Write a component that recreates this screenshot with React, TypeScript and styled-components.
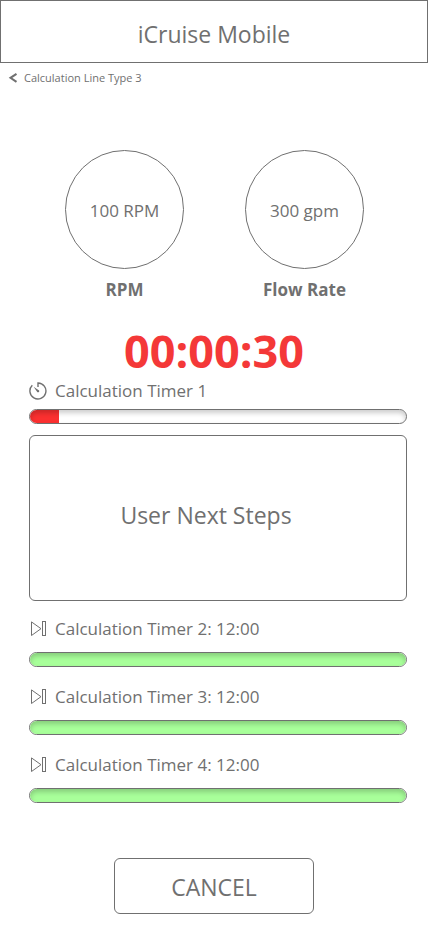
import React from "react";
import styled, { createGlobalStyle } from "styled-components";

const GlobalStyle = createGlobalStyle`
  *, *::before, *::after {
    box-sizing: border-box;
  }

  body {
    margin: 0;
    background: #ffffff;
    color: #707070;
    font-family: "Open Sans", "Noto Sans", sans-serif;
    font-size: 17px;
    line-height: 24px;
  }

  button {
    font: inherit;
    color: inherit;
  }
`;

const Screen = styled.div`
  display: flex;
  flex-direction: column;
  min-height: 100vh;
`;

const Header = styled.header`
  display: flex;
  align-items: center;
  justify-content: center;
  height: 63px;
  padding-top: 4px;
  border: 1px solid #707070;
`;

const AppTitle = styled.h1`
  margin: 0;
  font-size: 23px;
  line-height: 32px;
  font-weight: 400;
`;

const BackLink = styled.a`
  display: flex;
  align-items: center;
  align-self: flex-start;
  gap: 6px;
  padding: 7px 8px;
  color: inherit;
  font-size: 11px;
  line-height: 16px;
  text-decoration: none;
`;

const Content = styled.main`
  display: flex;
  flex-direction: column;
  padding: 57px 21px 12px 29px;
`;

const Gauges = styled.section`
  display: flex;
  justify-content: center;
  gap: 61px;
  padding-right: 7px;
`;

const Gauge = styled.figure`
  display: flex;
  flex-direction: column;
  align-items: center;
  gap: 9px;
  margin: 0;
`;

const Dial = styled.div`
  display: flex;
  align-items: center;
  justify-content: center;
  width: 119px;
  height: 119px;
  padding-top: 2px;
  border: 1px solid #707070;
  border-radius: 50%;
`;

const GaugeName = styled.figcaption`
  font-weight: 700;
`;

const Countdown = styled.time`
  margin-top: 23px;
  color: #f43838;
  font-size: 45px;
  line-height: 52px;
  font-weight: 700;
  text-align: center;
  padding-right: 8px;
`;

const Timer = styled.section`
  display: flex;
  flex-direction: column;
`;

const ActiveTimer = styled(Timer)`
  margin-top: 2px;
`;

const TimerHeading = styled.div`
  display: flex;
  align-items: center;
  gap: 8px;
`;

const TimerName = styled.h2`
  margin: 0;
  font-size: 17px;
  line-height: 24px;
  font-weight: 400;
`;

const SkipButton = styled.button`
  display: flex;
  padding: 0;
  border: 0;
  background: none;
  cursor: pointer;
`;

const Track = styled.div<{ $gap: number }>`
  position: relative;
  height: 15px;
  margin-top: ${({ $gap }) => $gap}px;
  border: 1px solid #707070;
  border-radius: 8px;
  background: #ffffff;
  overflow: hidden;

  &::after {
    content: "";
    position: absolute;
    inset: 0;
    border-radius: 7px;
    box-shadow: inset 0 3px 5px rgba(0, 0, 0, 0.2);
  }
`;

const Fill = styled.div<{ $color: string }>`
  height: 100%;
  background: ${({ $color }) => $color};
`;

const NextSteps = styled.section`
  display: flex;
  align-items: center;
  justify-content: center;
  height: 166px;
  margin-top: 11px;
  padding: 0 24px 6px 0;
  border: 1px solid #707070;
  border-radius: 6px;
  font-size: 23px;
  line-height: 32px;
`;

const Queue = styled.div`
  display: flex;
  flex-direction: column;
  gap: 18px;
  margin-top: 16px;
`;

const CancelButton = styled.button`
  align-self: center;
  width: 200px;
  height: 56px;
  margin: 55px 8px 0 0;
  padding: 2px 0 0;
  border: 1px solid #707070;
  border-radius: 6px;
  background: #ffffff;
  font-size: 23px;
  line-height: 32px;
  cursor: pointer;
`;

const ChevronIcon = () => (
  <svg width="10" height="12" viewBox="0 0 10 12" fill="none" stroke="#707070" strokeWidth="2" aria-hidden="true">
    <path d="M8.5 1.8 L2.5 5.8 L8.5 9.8" />
  </svg>
);

const TimerIcon = () => (
  <svg width="18" height="18" viewBox="0 0 18 18" fill="none" stroke="#707070" strokeWidth="1.4" aria-hidden="true">
    <path d="M3.3 3.3 A8 8 0 1 0 9 1 V5" />
    <path d="M4.6 4.8 L10.1 8.4 A1.3 1.3 0 0 1 8.4 10.2 Z" fill="#707070" stroke="none" />
  </svg>
);

const SkipIcon = () => (
  <svg width="18" height="18" viewBox="0 0 18 18" fill="none" stroke="#707070" strokeWidth="1" aria-hidden="true">
    <path d="M2.5 1.9 L12 8.7 L2.5 15.5 Z" />
    <rect x="13.5" y="1.5" width="3" height="14" />
  </svg>
);

interface ProgressProps {
  label: string;
  percent: number;
  color: string;
  gap: number;
}

const Progress = ({ label, percent, color, gap }: ProgressProps) => (
  <Track role="progressbar" aria-label={label} aria-valuenow={percent} aria-valuemin={0} aria-valuemax={100} $gap={gap}>
    <Fill $color={color} style={{ width: `${percent}%` }} />
  </Track>
);

const gauges = [
  { name: "RPM", value: "100 RPM" },
  { name: "Flow Rate", value: "300 gpm" },
];

const queuedTimers = [
  { name: "Calculation Timer 2", duration: "12:00" },
  { name: "Calculation Timer 3", duration: "12:00" },
  { name: "Calculation Timer 4", duration: "12:00" },
];

export default function App() {
  return (
    <>
      <GlobalStyle />
      <Screen>
        <Header>
          <AppTitle>iCruise Mobile</AppTitle>
        </Header>
        <BackLink href="#">
          <ChevronIcon />
          Calculation Line Type 3
        </BackLink>
        <Content>
          <Gauges>
            {gauges.map((gauge) => (
              <Gauge key={gauge.name}>
                <Dial>{gauge.value}</Dial>
                <GaugeName>{gauge.name}</GaugeName>
              </Gauge>
            ))}
          </Gauges>
          <Countdown>00:00:30</Countdown>
          <ActiveTimer>
            <TimerHeading>
              <TimerIcon />
              <TimerName>Calculation Timer 1</TimerName>
            </TimerHeading>
            <Progress label="Calculation Timer 1" percent={7.7} color="#fb3030" gap={6} />
          </ActiveTimer>
          <NextSteps>User Next Steps</NextSteps>
          <Queue>
            {queuedTimers.map((timer) => (
              <Timer key={timer.name}>
                <TimerHeading>
                  <SkipButton type="button" aria-label={`Skip to ${timer.name}`}>
                    <SkipIcon />
                  </SkipButton>
                  <TimerName>
                    {timer.name}: {timer.duration}
                  </TimerName>
                </TimerHeading>
                <Progress label={timer.name} percent={100} color="#a8ff9a" gap={11} />
              </Timer>
            ))}
          </Queue>
          <CancelButton type="button">CANCEL</CancelButton>
        </Content>
      </Screen>
    </>
  );
}
